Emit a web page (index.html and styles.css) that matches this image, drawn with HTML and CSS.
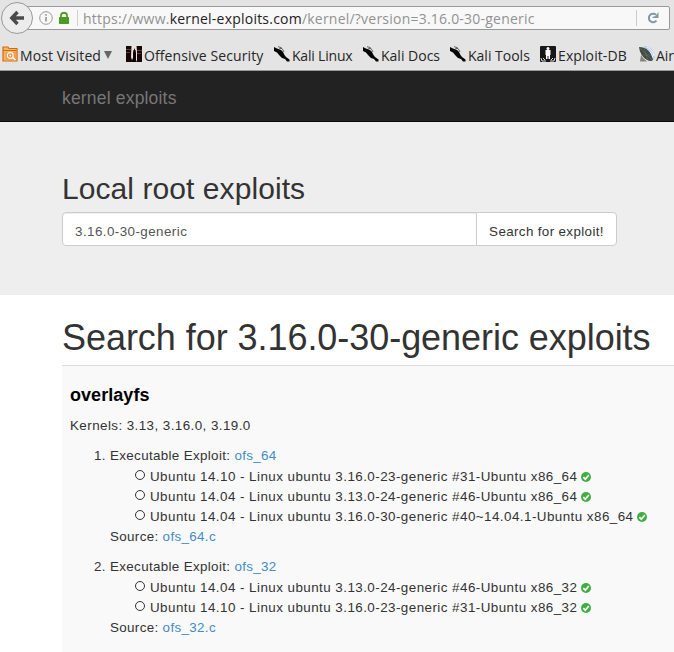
FILE: index.html
```html
<!DOCTYPE html>
<html lang="en">
<head>
<meta charset="utf-8">
<title>kernel exploits</title>
<link rel="stylesheet" href="styles.css">
</head>
<body>
<svg width="0" height="0" class="defs">
  <symbol id="kali" viewBox="0 0 16 16">
    <path d="M0 1 3 2.500 7 4 9 6 10.500 9 12 11 15.500 13.500V15.500H13L11 13 8 12 5 9 3 6.500 0 5Z" fill="#050505"/>
    <path d="M4 .7 7 1.500 9 4 10 6M5 3 8 2" fill="none" stroke="#444" stroke-width=".8"/>
  </symbol>
  <symbol id="ok" viewBox="0 0 10 10">
    <circle cx="5" cy="5" r="5" fill="#3fae3f"/>
    <path d="M2.300 5.200 4.300 7.200 7.800 3" fill="none" stroke="#fff" stroke-width="1.700"/>
  </symbol>
</svg>
<header class="browser">
  <div class="location">
    <div class="back">
      <svg width="16" height="16" viewBox="0 0 16 16"><path d="M8.500 2 2.800 8 8.500 14M3 8H15" fill="none" stroke="#4b4b4b" stroke-width="3.400"/></svg>
    </div>
    <div class="urlbar">
      <svg class="info" width="14" height="14" viewBox="0 0 14 14"><circle cx="7" cy="7" r="6.300" fill="none" stroke="#999"/><path d="M7 6V10.500M7 3.200V4.800" stroke="#8b8b8b" stroke-width="1.500"/></svg>
      <svg class="lock" width="10" height="12" viewBox="0 0 10 12"><path d="M2 6V3.500a3 2.700 0 0 1 6 0V6" fill="none" stroke="#4b9b1f" stroke-width="1.700"/><rect y="5" width="10" height="7" rx=".7" fill="#4b9b1f"/></svg>
      <span class="url">https://www.<b>kernel-exploits.com</b>/kernel/?version=3.16.0-30-generic</span>
      <span class="reload"><svg width="12" height="12" viewBox="0 0 12 12"><path d="M9.500 8.700A4.300 4.300 0 1 1 9 2.700" fill="none" stroke="#8497a5" stroke-width="2"/><path d="M11.500 0V6H5.500V5L8.500 4Z" fill="#8497a5"/></svg></span>
    </div>
  </div>
  <nav class="bookmarks">
    <a class="visited"><svg width="16" height="16" viewBox="0 0 16 16"><path d="M1 2.500V1H6L7 2.500H15V15H1Z" fill="#f8b665" stroke="#d66b12" stroke-width="1.200"/><path d="M1 4.500H14" stroke="#d66b12"/><rect x="3.500" y="6" width="11" height="8.500" fill="#f0a050"/><circle cx="8.300" cy="9.500" r="2.900" fill="#e98a35" stroke="#fff" stroke-width="1.100"/><path d="m10.500 11.500 3 2.500" stroke="#fff" stroke-width="1.500"/><circle cx="8.300" cy="9.500" r="1" fill="#fff"/></svg><span>Most Visited</span><i class="drop"></i></a>
    <a class="offsec"><svg width="16" height="16" viewBox="0 0 16 16"><path d="M0 0H16V16H0Z" fill="#180707"/><path d="M0 3.500H5M0 6.500H4M11 4.500H16M11 7.500H15" stroke="#59403d"/><path d="M5.500 0H10.500L11 5V14L10 16V7L8.500 2 7 7V12L6 14 5 11Z" fill="#eee4d9"/><path d="M7.500 4H9.500V16H7Z" fill="#090404"/></svg><span>Offensive Security</span></a>
    <a class="kali"><svg width="16" height="16"><use href="#kali"/></svg><span>Kali Linux</span></a>
    <a class="kali docs"><svg width="16" height="16"><use href="#kali"/></svg><span>Kali Docs</span></a>
    <a class="kali docs"><svg width="16" height="16"><use href="#kali"/></svg><span>Kali Tools</span></a>
    <a class="edb"><svg width="16" height="16" viewBox="0 0 16 16"><rect width="16" height="16" rx="1" fill="#171717"/><circle cx="8" cy="2.500" r="1.500" fill="#fff"/><path d="M5.500 4H10.500V9H10V13H8.500V10H7.500V13H6V9H5.500Z" fill="#fff"/><path d="M1 12 2 15H6M15 12 14 15H10M3 12 5 14M13 12 11 14" fill="none" stroke="#ddd"/></svg><span>Exploit-DB</span></a>
    <a class="air"><svg width="16" height="16" viewBox="0 0 16 16"><path d="M5 0Q15 0 16 12L13 15 7 5Z" fill="#b9cdf0"/><path d="M6 3Q12 4 14 12M8 1Q14 4 15 10" fill="none" stroke="#f6f9ff"/><path d="M2 9 1 15.500H8L4 12Z" fill="#888475"/><path d="M0 1Q11 1 14 14Q12 16 8 14Q1 10 0 1Z" fill="#414c45"/><path d="M1 2 13 14M3 9 12 9M5 2 9 14" stroke="#68706a" stroke-width=".6"/></svg><span>Aircrack-ng</span></a>
  </nav>
</header>
<div class="navbar"><a class="brand">kernel exploits</a></div>
<section class="jumbotron">
  <h2>Local root exploits</h2>
  <form class="search">
    <input type="text" value="3.16.0-30-generic" aria-label="Kernel version">
    <button type="button">Search for exploit!</button>
  </form>
</section>
<main>
  <h1>Search for 3.16.0-30-generic exploits</h1>
  <article class="result">
    <h3>overlayfs</h3>
    <p>Kernels: 3.13, 3.16.0, 3.19.0</p>
    <ol>
      <li>Executable Exploit: <a>ofs_64</a>
        <ul>
          <li>Ubuntu 14.10 - Linux ubuntu 3.16.0-23-generic #31-Ubuntu x86_64 <svg class="ok"><use href="#ok"/></svg></li>
          <li>Ubuntu 14.04 - Linux ubuntu 3.13.0-24-generic #46-Ubuntu x86_64 <svg class="ok"><use href="#ok"/></svg></li>
          <li>Ubuntu 14.04 - Linux ubuntu 3.16.0-30-generic #40~14.04.1-Ubuntu x86_64 <svg class="ok"><use href="#ok"/></svg></li>
        </ul>
        Source: <a>ofs_64.c</a></li>
      <li>Executable Exploit: <a>ofs_32</a>
        <ul>
          <li>Ubuntu 14.04 - Linux ubuntu 3.13.0-24-generic #46-Ubuntu x86_32 <svg class="ok"><use href="#ok"/></svg></li>
          <li>Ubuntu 14.10 - Linux ubuntu 3.16.0-23-generic #31-Ubuntu x86_32 <svg class="ok"><use href="#ok"/></svg></li>
        </ul>
        Source: <a>ofs_32.c</a></li>
    </ol>
  </article>
</main>
</body>
</html>
```
FILE: styles.css
```css
* { box-sizing: border-box; }
html { height: 652px; overflow: hidden; }
body { margin: 0; height: 652px; overflow: hidden; background: #fff; color: #333; font: 13.4px/20px "Liberation Sans", Arial, sans-serif; letter-spacing: .43px; }
.defs { display: block; }
.browser { height: 71px; background: #e4e4e4; border-bottom: 1px solid #979b97; overflow: hidden; font-family: "Open Sans", "Noto Sans", sans-serif; letter-spacing: 0; }
.location { display: flex; height: 40px; padding: 2px 4px 0 1px; }
.back { z-index: 1; flex: none; display: flex; align-items: center; justify-content: center; width: 32px; height: 32px; border: 1px solid #999; border-radius: 50%; background: #ececec; }
.urlbar { flex: 1; display: flex; align-items: center; height: 24px; margin: 4px 0 0 -8px; padding-left: 13px; border: 1px solid #979b97; border-radius: 2px; background: #f8f8f8; }
.lock { margin-left: 6px; }
.url { margin-left: 8px; padding-left: 5px; border-left: 1px solid #d0d0d0; height: 16px; line-height: 18px; width: 559px; font-size: 14px; letter-spacing: .22px; color: #929292; white-space: nowrap; }
.url b { font-weight: 400; color: #222; }
.reload { display: flex; align-items: center; height: 16px; padding-left: 10px; border-left: 1px solid #ccc; }
.bookmarks { display: grid; grid-template-columns: 124px 148px 89px 87px 90px 99px 90px; padding: 6px 0 0 2px; }
.bookmarks a { display: flex; align-items: center; height: 16px; gap: 2px; white-space: nowrap; font-size: 14px; letter-spacing: .1px; color: #262626; }
.bookmarks span { line-height: 18px; padding-top: 3px; }
.bookmarks .kali { letter-spacing: -.2px; }
.bookmarks .docs { letter-spacing: 0; }
.bookmarks .air { gap: 1px; letter-spacing: -.1px; }
.bookmarks svg { flex: none; }
.drop { margin: 1px 0 0 1px; border: 4px solid transparent; border-top: 8px solid #666; border-bottom: 0; }
.navbar { height: 51px; padding: 17px 62px; background: #222; border-bottom: 1px solid #080808; }
.brand { font-size: 17.5px; letter-spacing: .18px; color: #777; }
.jumbotron { height: 173px; padding: 50px 57px 0 62px; background: #eee; }
h1, h2 { font-weight: 400; margin: 0; white-space: nowrap; }
h2 { font-size: 30px; line-height: 33px; letter-spacing: .07px; }
.search { display: flex; margin-top: 7px; height: 34px; }
.search input, .search button { font: inherit; letter-spacing: inherit; border: 1px solid #ccc; background: #fff; padding: 6px 12px 0; }
.search input { width: 415px; color: #555; border-radius: 4px 0 0 4px; box-shadow: inset 0 1px 1px rgba(0,0,0,.075); }
.search button { width: 141px; margin-left: -1px; padding: 5px 0 0; color: #333; border-radius: 0 4px 4px 0; white-space: nowrap; letter-spacing: .36px; }
main { padding: 23px 0 0 62px; }
h1 { font-size: 36px; line-height: 40px; letter-spacing: -.05px; }
.result { height: 300px; margin-top: 7px; padding: 19px 8px; background: #f9f9f9; border-top: 1px solid #ddd; }
h3 { margin: 0; color: #000; font-size: 18px; line-height: 20px; letter-spacing: .05px; }
.result p { margin: 11px 0 10px; }
ol { margin: 0; padding-left: 40px; letter-spacing: .34px; }
ol > li + li { margin-top: 10px; }
ul { margin: 1px 0 0; padding-left: 25px; list-style: none; white-space: nowrap; letter-spacing: .45px; }
ul li::before { content: ""; display: inline-block; width: 8px; height: 8px; margin-right: 5px; border: 1px solid #333; border-radius: 50%; vertical-align: 1px; }
.result a { color: #428bca; }
.ok { width: 10px; height: 10px; vertical-align: -1px; margin-left: -1px; }
```
